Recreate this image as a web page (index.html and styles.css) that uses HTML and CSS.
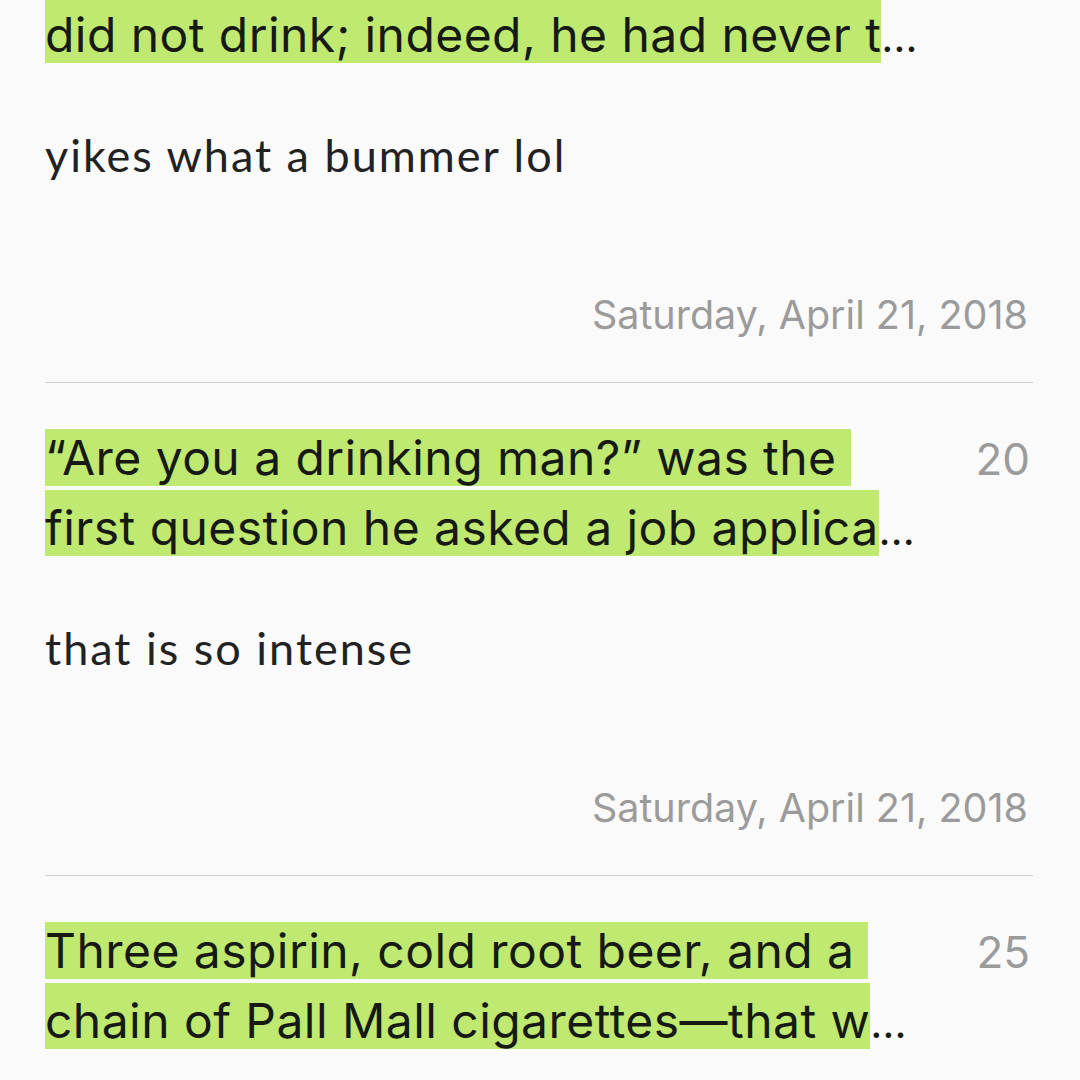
FILE: index.html
```html
<!DOCTYPE html>
<html lang="en">
<head>
<meta charset="utf-8">
<title>Notes</title>
<link rel="stylesheet" href="styles.css">
</head>
<body>
<main class="notes">
  <section class="entry entry-partial">
    <div class="quote-row">
      <div class="quote">
        <div class="line line-last"><span class="hl">did not drink; indeed, he had never t</span><span class="more">…</span></div>
      </div>
    </div>
    <p class="note">yikes what a bummer lol</p>
    <p class="date">Saturday, April 21, 2018</p>
  </section>
  <section class="entry">
    <div class="quote-row">
      <div class="quote">
        <div class="line"><span class="hl">“Are you a drinking man?” was the&nbsp;</span></div>
        <div class="line line-last"><span class="hl">first question he asked a job applica</span><span class="more">…</span></div>
      </div>
      <span class="loc">20</span>
    </div>
    <p class="note">that is so intense</p>
    <p class="date">Saturday, April 21, 2018</p>
  </section>
  <section class="entry">
    <div class="quote-row">
      <div class="quote">
        <div class="line"><span class="hl">Three aspirin, cold root beer, and a&nbsp;</span></div>
        <div class="line line-last"><span class="hl">chain of Pall Mall cigarettes—that w</span><span class="more">…</span></div>
      </div>
      <span class="loc">25</span>
    </div>
  </section>
</main>
</body>
</html>
```

FILE: styles.css
```css
html, body {
  margin: 0;
  padding: 0;
  background: #fafafa;
}

.notes {
  padding: 0 47px 0 45px;
  font-family: Inter, "Liberation Sans", sans-serif;
  color: #161a12;
  height: 1080px;
  overflow: hidden;
}

.entry {
  padding-top: 46px;
  padding-bottom: 45px;
  border-bottom: 1px solid #cfcfcf;
}

.entry-partial {
  padding-top: 0;
  margin-top: -3px;
}

.quote-row {
  display: flex;
  align-items: baseline;
  justify-content: space-between;
}

.line {
  font-size: 48px;
  line-height: 57px;
  letter-spacing: 0.45px;
  white-space: nowrap;
}

.line + .line {
  margin-top: 4px;
}

.hl {
  display: inline-block;
  background: #bfe971;
  height: 57px;
  white-space: pre;
}

.line-last .hl {
  height: 66px;
  padding-top: 9px;
  box-sizing: border-box;
}

.more {
  font-size: 42px;
  line-height: 20px;
  letter-spacing: -1px;
}

.loc {
  font-size: 44px;
  line-height: 57px;
  color: #9b9b9b;
  padding-right: 3px;
}

.note {
  margin: 62px 0 0;
  font-family: Lato, "Open Sans", sans-serif;
  font-size: 45px;
  line-height: 60px;
  letter-spacing: 2px;
  color: #222222;
}

.date {
  margin: 108px 0 0;
  text-align: right;
  font-size: 39.5px;
  line-height: 44px;
  color: #9b9b9b;
  padding-right: 5px;
}
```
